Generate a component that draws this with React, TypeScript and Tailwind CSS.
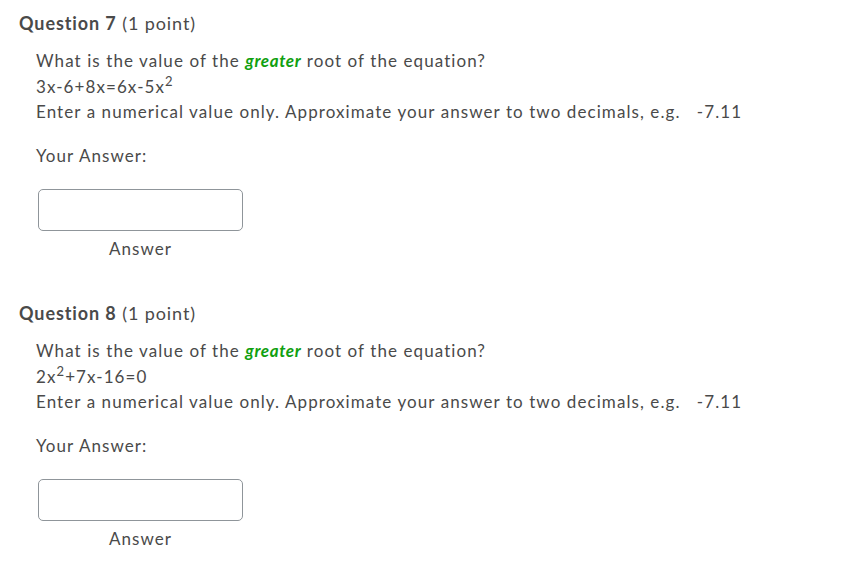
import React from "react";

function Question({ num, eq }: { num: number; eq: React.ReactNode }) {
  return (
    <div className="h-[290px]">
      <div className="pl-[19px] pt-[11px] text-[18px] leading-[24px] tracking-[0.9px]">
        <span className="font-bold">Question {num}</span> (1 point)
      </div>
      <div className="pl-[36px] pt-[13px] text-[17px] leading-[25.5px] tracking-[1.08px]">
        <div>
          What is the value of the{" "}
          <em className="font-bold text-[#10a010] tracking-[0.6px]">greater</em> root of the equation?
        </div>
        <div>{eq}</div>
        <div>
          Enter a numerical value only. Approximate your answer to two decimals, e.g.&nbsp;&nbsp; -7.11
        </div>
        <div className="mt-[18px]">Your Answer:</div>
        <div className="mt-[21px] ml-[2px] w-[205px]">
          <div className="h-[42px] w-[205px] rounded-[5px] border border-[#8f959a] bg-white" />
          <div className="mt-[5px] text-center">Answer</div>
        </div>
      </div>
    </div>
  );
}

export default function App() {
  return (
    <div
      className="w-[846px] h-[573px] bg-white text-[#4a4a4a] overflow-hidden"
      style={{ fontFamily: "Lato, 'Noto Sans', sans-serif" }}
    >
      <Question num={7} eq={<>3x-6+8x=6x-5x<sup className="text-[13px]">2</sup></>} />
      <Question num={8} eq={<>2x<sup className="text-[13px]">2</sup>+7x-16=0</>} />
    </div>
  );
}
